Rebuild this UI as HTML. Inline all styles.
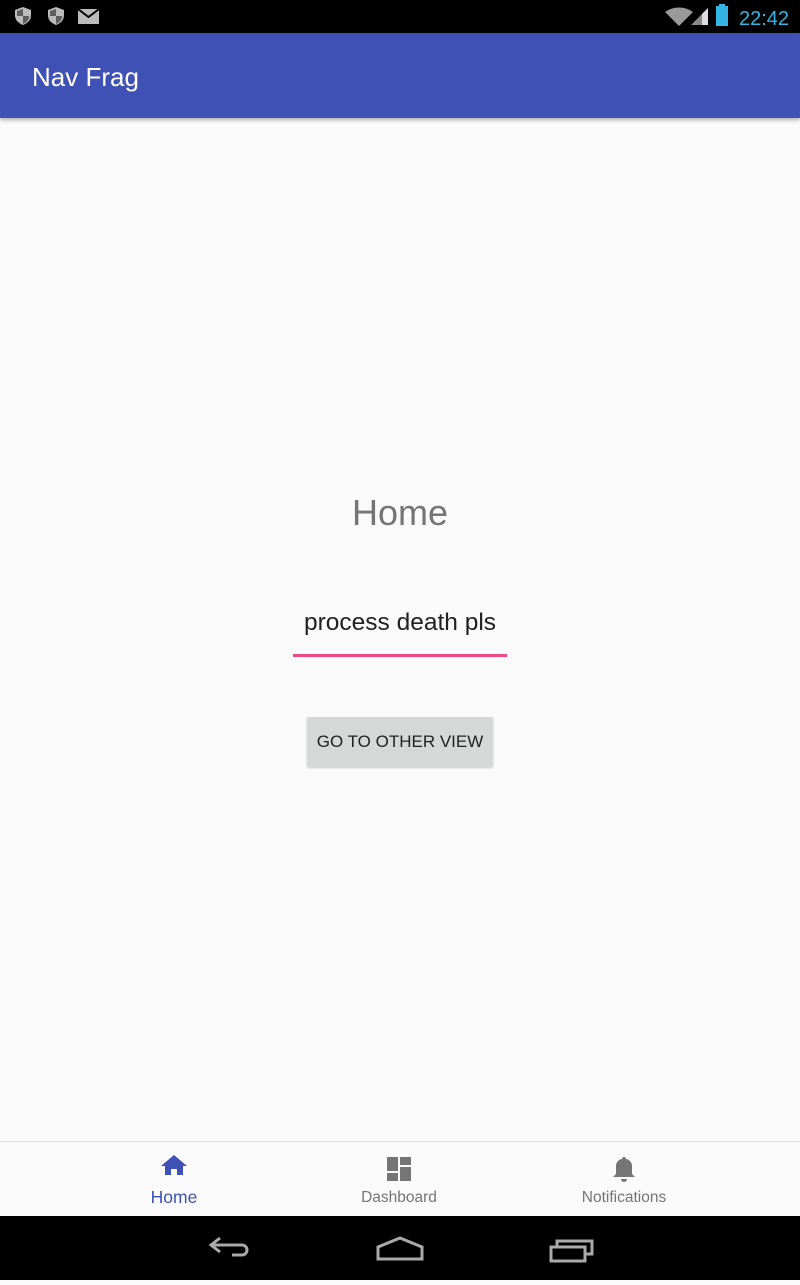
<!DOCTYPE html>
<html><head><meta charset="utf-8"><style>
*{margin:0;padding:0;box-sizing:border-box}
body{width:800px;height:1280px;background:#fafafa;font-family:"Liberation Sans",sans-serif;position:relative;overflow:hidden}
.sb{position:absolute;top:0;left:0;width:800px;height:33px;background:#000}
.ab{position:absolute;top:33px;left:0;width:800px;height:85px;background:#3f51b5;box-shadow:0 2px 4px rgba(0,0,0,.3)}
.ab span{position:absolute;left:32px;top:29px;color:#fff;font-size:26px}
.home{position:absolute;top:492px;width:800px;text-align:center;font-size:36px;color:#757575}
.et{position:absolute;top:609px;left:283px;width:234px;text-align:center;font-size:24.5px;color:#212121}
.ul{position:absolute;top:654px;left:293px;width:214px;height:3px;background:#e91e63;opacity:.8}
.btn{position:absolute;top:717px;left:307px;width:186px;height:50px;background:#d6d7d7;border-radius:2px;box-shadow:0 1px 2px rgba(0,0,0,.2);font-size:17px;color:#212121;text-align:center;line-height:50px}
.bn{position:absolute;top:1141px;left:0;width:800px;height:75px;background:#fafafa;border-top:1px solid #e0e0e0}
.it{position:absolute;top:0;width:200px;text-align:center}
.it .l{position:absolute;top:47px;width:200px;font-size:15.5px;color:#757575}
.nb{position:absolute;top:1216px;left:0;width:800px;height:64px;background:#000}
</style></head><body>
<div class="sb">
<svg width="800" height="33" style="position:absolute;top:0;left:0">
<path d="M23 7l-8 3v5c0 5 3 8 8 10 5-2 8-5 8-10v-5z" fill="#bbb"/><path d="M23 9v7h6c0 4-2 6-6 8v-8h-6v-5z" fill="#000" opacity=".5"/>
<path d="M56 7l-8 3v5c0 5 3 8 8 10 5-2 8-5 8-10v-5z" fill="#bbb"/><path d="M56 9v7h6c0 4-2 6-6 8v-8h-6v-5z" fill="#000" opacity=".5"/>
<rect x="78" y="9" width="21" height="15" fill="#bbb"/><path d="M78 9l10.5 8 10.5-8" stroke="#000" stroke-width="2" fill="none"/>
<path d="M665 12a24 24 0 0 1 28 0l-14 14z" fill="#999"/>
<path d="M708 8v17h-17z" fill="#888"/><path d="M708 8v17h-6v-11z" fill="#ddd"/>
<rect x="716" y="6" width="12" height="20" fill="#33b5e5"/><rect x="719" y="4" width="6" height="3" fill="#33b5e5"/>
<text x="739" y="25" font-size="20" fill="#33b5e5" font-family="Liberation Sans">22:42</text>
</svg></div>
<div class="ab"><span>Nav Frag</span></div>
<div class="home">Home</div>
<div class="et">process death pls</div>
<div class="ul"></div>
<div class="btn">GO TO OTHER VIEW</div>
<div class="bn">
<div class="it" style="left:74px"><svg width="200" height="40"><path d="M100 13l-13 11h4v9h6v-6h6v6h6v-9h4z" fill="#3f51b5"/></svg><div class="l" style="color:#3f51b5;font-size:17.5px;top:45px">Home</div></div>
<div class="it" style="left:299px"><svg width="200" height="42"><g fill="#757575"><rect x="88" y="15" width="11" height="14"/><rect x="101" y="15" width="11" height="8"/><rect x="101" y="25" width="11" height="14"/><rect x="88" y="31" width="11" height="8"/></g></svg><div class="l">Dashboard</div></div>
<div class="it" style="left:524px"><svg width="200" height="42"><path d="M100 15c-1 0-2 1-2 2a7 7 0 0 0-6 7v8l-3 3h22l-3-3v-8a7 7 0 0 0-6-7c0-1-1-2-2-2z" fill="#757575"/><path d="M97 37h6a3 3 0 0 1-6 0z" fill="#757575"/></svg><div class="l">Notifications</div></div>
</div>
<div class="nb"><svg width="800" height="64">
<g stroke="#aaa" stroke-width="3" fill="none">
<path d="M220 24l-9 7 9 7M211 31h31a5 5 0 0 1 0 10h-10" transform="translate(0,-2)"/>
<path d="M378 42v-12l22-9 22 9v12z" transform="translate(0,1)"/>
<rect x="551" y="37" width="34" height="14" transform="translate(0,-6)"/><path d="M557 36v-5h35v13h-6" transform="translate(0,-6)"/>
</g></svg></div>
</body></html>
